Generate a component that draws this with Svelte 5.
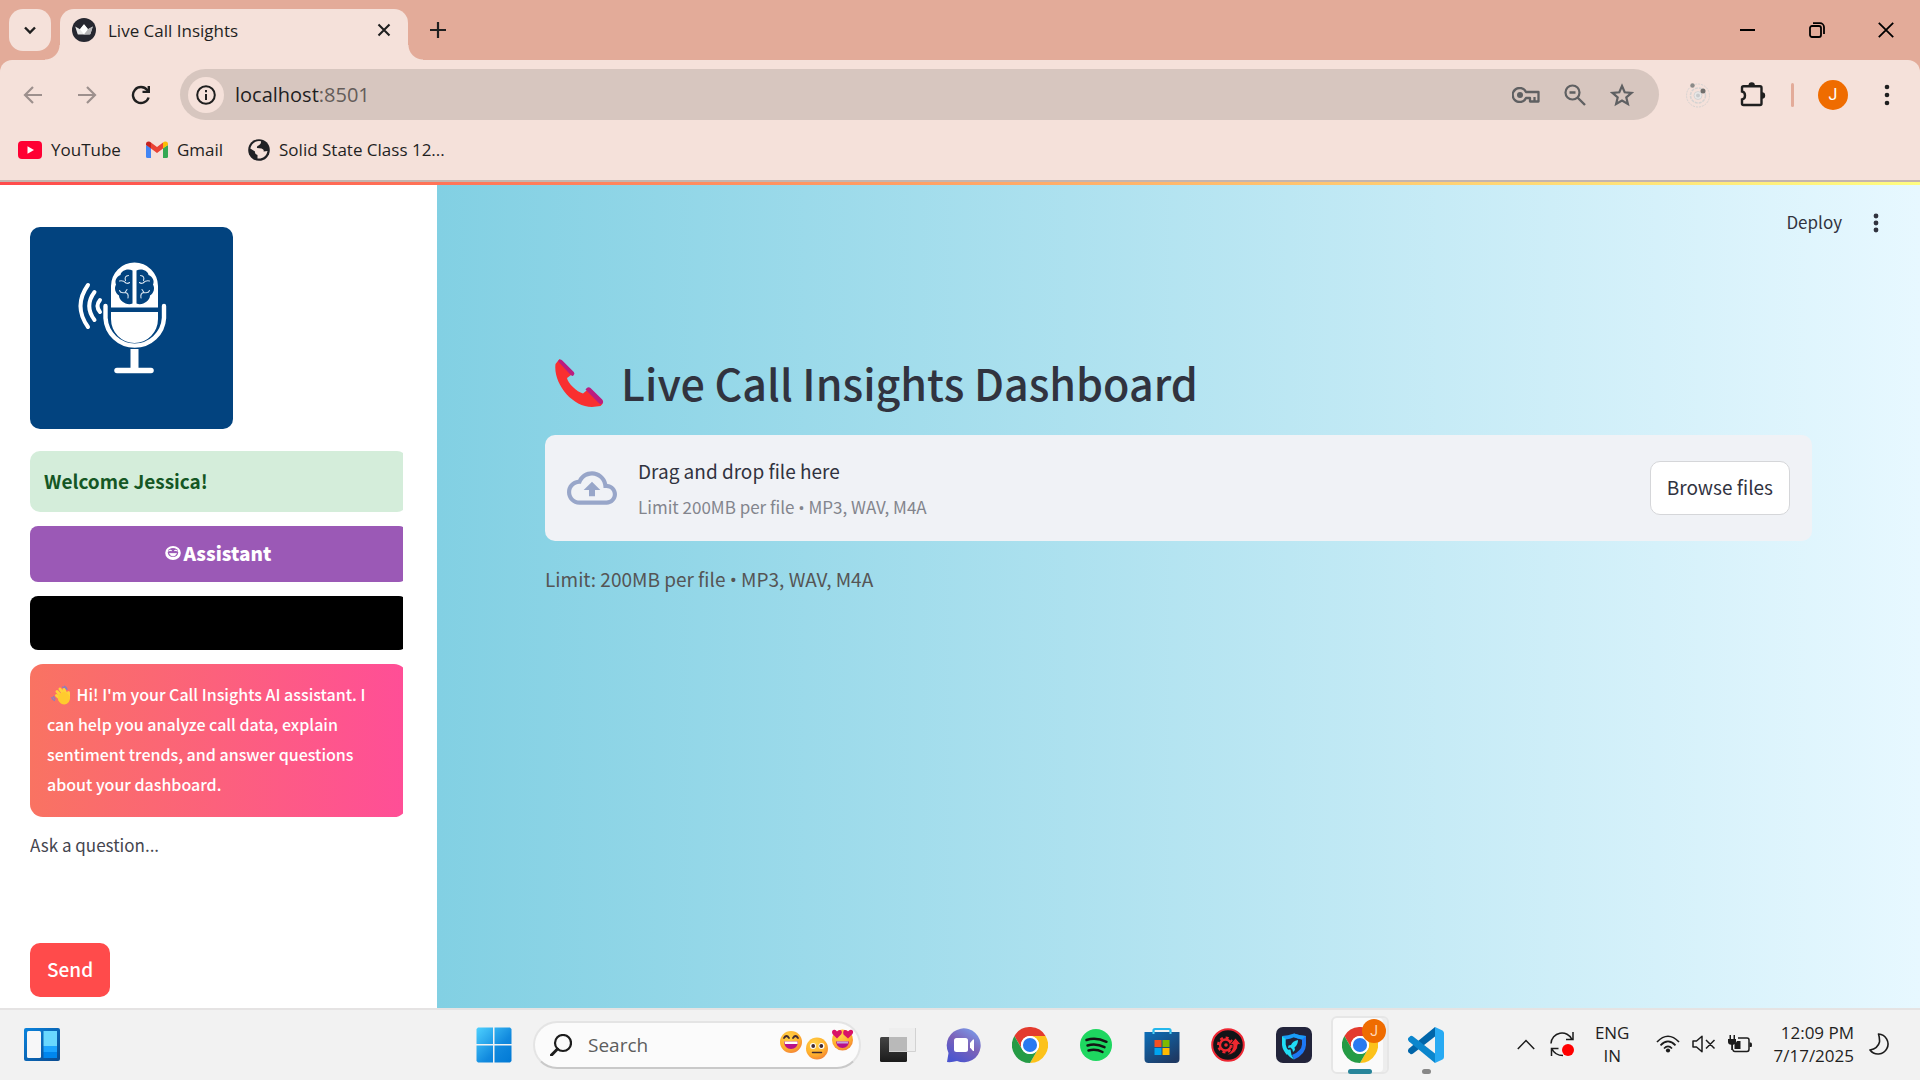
<script>
  const bookmarkLabels = ['YouTube', 'Gmail', 'Solid State Class 12...'];
  let question = $state('');
</script>

{#snippet chromeLogo()}
  <svg width="36" height="36" viewBox="0 0 48 48" aria-hidden="true">
    <circle cx="24" cy="24" r="24" fill="#fff" />
    <path d="M3.2 12A24 24 0 0 1 44.8 12H24A12 12 0 0 0 13.6 30Z" fill="#e33b2e" />
    <path d="M44.8 12A24 24 0 0 1 24 48L34.4 30A12 12 0 0 0 24 12Z" fill="#fcc21b" />
    <path d="M24 48A24 24 0 0 1 3.2 12L13.6 30A12 12 0 0 0 34.4 30Z" fill="#259b45" />
    <circle cx="24" cy="24" r="12" fill="#fff" />
    <circle cx="24" cy="24" r="9.4" fill="#2a7af0" />
  </svg>
{/snippet}

<div class="screen">
  <header class="browser">
    <div class="tabstrip">
      <button class="tab-search" aria-label="Search tabs">
        <svg width="14" height="14" viewBox="0 0 14 14"><path d="M2 4.5 7 9.5 12 4.5" fill="none" stroke="#1f1f1f" stroke-width="2.4" /></svg>
      </button>
      <div class="tab">
        <svg width="24" height="24" viewBox="0 0 24 24" aria-hidden="true">
          <circle cx="12" cy="12" r="12" fill="#262730" />
          <path d="M3.2 8.6 8 11.2 11.6 6.6Q12 6.2 12.4 6.6L16 11.2 20.8 8.6 18.4 16Q18.2 16.6 17.5 16.6H6.5Q5.800 16.6 5.600 16Z" fill="#e6e6e6" />
          <path d="M8 11.200 12 6.400 16 11.200 12 16.600Z" fill="#fff" />
          <path d="M16 11.200 20.800 8.600 18.400 16 12 16.600Z" fill="#b5b5b8" />
        </svg>
        <span class="tab-title">Live Call Insights</span>
        <button class="plain" aria-label="Close tab">
          <svg width="14" height="14" viewBox="0 0 14 14"><path d="M1.500 1.500 12.500 12.500M12.500 1.500 1.500 12.500" stroke="#1f1f1f" stroke-width="2.100" /></svg>
        </button>
      </div>
      <button class="plain newtab" aria-label="New tab">
        <svg width="16" height="16" viewBox="0 0 16 16"><path d="M8 0V16M0 8H16" stroke="#1f1f1f" stroke-width="2.200" /></svg>
      </button>
      <div class="window-controls">
        <button class="plain" aria-label="Minimize"><svg width="16" height="16" viewBox="0 0 16 16"><path d="M0 8H15" stroke="#000" stroke-width="2" /></svg></button>
        <button class="plain" aria-label="Restore"><svg width="16" height="16" viewBox="0 0 16 16" fill="none" stroke="#000" stroke-width="1.800"><rect x="1" y="4" width="11" height="11" rx="2" /><path d="M4 1.200H11A4 4 0 0 1 15 5V12" /></svg></button>
        <button class="plain" aria-label="Close window"><svg width="16" height="16" viewBox="0 0 16 16"><path d="M.8.8 15.200 15.200M15.200.8.8 15.200" stroke="#000" stroke-width="1.800" /></svg></button>
      </div>
    </div>

    <div class="toolbar">
      <button class="plain nav" aria-label="Back"><svg width="20" height="20" viewBox="0 0 20 20"><path d="M19 10H2.500M10 2 2 10 10 18" fill="none" stroke="#9d908d" stroke-width="2.200" /></svg></button>
      <button class="plain nav" aria-label="Forward"><svg width="20" height="20" viewBox="0 0 20 20"><path d="M1 10H17.500M10 2 18 10 10 18" fill="none" stroke="#9d908d" stroke-width="2.200" /></svg></button>
      <button class="plain nav" aria-label="Reload"><svg width="20" height="20" viewBox="0 0 20 20"><path d="M17.600 12.500A8 8 0 1 1 16.200 5L17.500 6.500" fill="none" stroke="#1f1f1f" stroke-width="2.400" /><path d="M19 1V8H11.500V5.800H16.600V1Z" fill="#1f1f1f" /></svg></button>
      <div class="omnibox">
        <button class="site-info" aria-label="Site information">
          <svg width="20" height="20" viewBox="0 0 20 20"><circle cx="10" cy="10" r="8.800" fill="none" stroke="#1f1f1f" stroke-width="2" /><path d="M10 9V15M10 5V7.200" stroke="#1f1f1f" stroke-width="2" /></svg>
        </button>
        <span class="url">localhost<i>:8501</i></span>
        <button class="plain" aria-label="Passwords"><svg width="28" height="16" viewBox="0 0 28 16" fill="none" stroke="#5f6062" stroke-width="2.300"><path d="M14 5A7 7 0 1 0 14 11H18V14.500H26.500V5Z" stroke-linejoin="round" /><path d="M22.500 10V14" /><circle cx="8" cy="8" r="3" fill="#5f6062" stroke="none" /></svg></button>
        <button class="plain" aria-label="Zoom"><svg width="22" height="22" viewBox="0 0 22 22" fill="none" stroke="#5f6062" stroke-width="2.200"><circle cx="8.500" cy="8.500" r="7" /><path d="M13.500 13.500 21 21M5.500 8.500H11.500" stroke-width="2.400" /></svg></button>
        <button class="plain" aria-label="Bookmark this page"><svg width="24" height="24" viewBox="0 0 24 24"><path d="M12 3 14.700 9.300 21.500 9.900 16.300 14.400 17.900 21 12 17.500 6.100 21 7.700 14.400 2.500 9.900 9.300 9.300Z" fill="none" stroke="#5f6062" stroke-width="2.200" /></svg></button>
      </div>
      <button class="plain ext" aria-label="Extension">
        <svg width="26" height="26" viewBox="0 0 26 26" fill="none" stroke="#d5d3d2"><circle cx="13" cy="13.500" r="11.500" stroke-dasharray="2 1" /><circle cx="13" cy="13.500" r="7.500" stroke-width="1.500" stroke-dasharray="3 1" /><circle cx="13" cy="13.500" r="4" fill="#e8e8e8" /><circle cx="13" cy="13.500" r="2" fill="#c8cacb" stroke="none" /><circle cx="7.500" cy="3.500" r="2.200" fill="#8a8a88" stroke="none" /><circle cx="18" cy="9" r="2.500" fill="#706f6d" stroke="none" /></svg>
      </button>
      <button class="plain puzzle" aria-label="Extensions">
        <svg width="26" height="26" viewBox="0 0 26 26"><path d="M3.500 4.200H20Q21.500 4.200 21.500 5.700V21.500Q21.500 23 20 23H3.500Q2 23 2 21.500V17.500Q5 17 5 13.500T2 9.500V5.700Q2 4.200 3.500 4.200Z" fill="none" stroke="#1f1f1f" stroke-width="2.400" /><path d="M8.500 3.500A3.200 3.200 0 0 1 14.900 3.500ZM22 10.300A3.200 3.200 0 0 1 22 16.700Z" fill="#1f1f1f" /></svg>
      </button>
      <span class="divider"></span>
      <button class="avatar" aria-label="Profile">J</button>
      <button class="plain menu" aria-label="Browser menu"><svg width="6" height="22" viewBox="0 0 6 22" fill="#1f1f1f"><circle cx="3" cy="3" r="2.300" /><circle cx="3" cy="11" r="2.300" /><circle cx="3" cy="19" r="2.300" /></svg></button>
    </div>

    <nav class="bookmarks" aria-label="Bookmarks">
      <a href="#youtube">
        <svg width="24" height="18" viewBox="0 0 24 18" aria-hidden="true"><rect width="24" height="18" rx="4" fill="#ff0033" /><path d="M9.500 5.200V12.800L16 9Z" fill="#fff" /></svg>
        {bookmarkLabels[0]}
      </a>
      <a href="#gmail">
        <svg width="22" height="17" viewBox="0 0 22 17" aria-hidden="true"><path d="M0 4V15.500Q0 17 1.500 17H5V7Z" fill="#4285f4" /><path d="M22 4V15.500Q22 17 20.500 17H17V7Z" fill="#34a853" /><path d="M5 1.500 11 6 17 1.500V7.500L11 12 5 7.500Z" fill="#ea4335" /><path d="M0 3.200Q0 .5 2.600.4 4 .4 5 1.500V7.500L0 4Z" fill="#c5221f" /><path d="M22 3.200Q22 .5 19.400.4 18 .4 17 1.500V7.500L22 4Z" fill="#fbbc04" /></svg>
        {bookmarkLabels[1]}
      </a>
      <a href="#solid-state">
        <svg width="22" height="22" viewBox="0 0 22 22" aria-hidden="true"><circle cx="11" cy="11" r="10.800" fill="#202124" /><path d="M7.500 2.700Q10 1.700 13 2.200 13.500 5 11 6.200 8.500 6.500 9 9L13.500 9.500Q16.500 10.500 15.500 12.500L19.500 12Q18.500 18 12.500 19.600L9.500 19.500V16Q6.500 15.500 7 12.500L2.300 9.500Q3.300 5 7.500 2.700Z" fill="#f5e1da" /><path d="M13.500 3 17.800 5.400 19.500 9 15 7.500 12.500 9 11.300 7.200 13.200 6.200Z" fill="#202124" /></svg>
        {bookmarkLabels[2]}
      </a>
    </nav>
  </header>

  <div class="app">
    <aside>
      <div class="side-content">
        <svg class="logo" viewBox="0 0 203 202" role="img" aria-label="Microphone with brain">
          <rect width="203" height="202" fill="#02437f" />
          <g fill="none" stroke="#fff" stroke-linecap="round">
            <path d="M58 58Q43 79 58 100M64.500 65Q54 79 64.500 93M70 73Q65 79 70 85" stroke-width="4" />
            <path d="M75.500 79V91A29.300 29.300 0 0 0 134 91V79" stroke-width="4.400" />
            <path d="M87 143.500H121" stroke-width="5.500" />
            <path d="M104.500 122V142" stroke-width="8" stroke-linecap="butt" />
          </g>
          <path d="M81 80.500V59A23.500 23.500 0 0 1 128 59V80.500ZM81 85H128V92A23.500 24 0 0 1 81 92Z" fill="#fff" />
          <path d="M102.500 43.500C97 41 91 44 90.500 48 86 50 84.500 54 86 57.500 84 61 85 66 89 68.500 89 74 97 79 102.500 76.500ZM106.500 43.500C112 41 118 44 118.500 48 123 50 124.500 54 123 57.500 125 61 124 66 120 68.500 120 74 112 79 106.500 76.500Z" fill="#02437f" />
          <path d="M98.500 48.500Q94 49 95.500 53.500M89.500 54Q93 53 96 56 98 57 99.500 55.500M89.500 63.500Q90.500 66.500 95 65.500 99 66 98 71M95 65.500 97 62.500M110.500 48.500Q115 49 113.500 53.500M119.500 54Q116 53 113 56 111 57 109.500 55.500M119.500 63.500Q118.500 66.500 114 65.500 110 66 111 71M114 65.500 112 62.500" fill="none" stroke="#d5e2ee" stroke-width="1.100" stroke-linecap="round" />
        </svg>
        <div class="card welcome">Welcome Jessica!</div>
        <div class="card assistant">
          <svg width="16" height="14" viewBox="0 0 16 14" aria-hidden="true"><ellipse cx="8" cy="7" rx="7.800" ry="6.900" fill="#fff" /><ellipse cx="8" cy="6.500" rx="5.200" ry="4.500" fill="#9b59b6" /><path d="M3.500 5.200Q5 3.200 7 4.800M9 4.800Q11 3.200 12.500 5.200M4.500 7.500H11.500Q10.500 10 8 10T4.500 7.500Z" fill="#fff" stroke="#fff" stroke-width=".7" /></svg>
          Assistant
        </div>
        <div class="card blank"></div>
        <div class="card bubble">
          <svg class="wave" width="20" height="20" viewBox="0 0 20 20" aria-hidden="true">
            <path d="M13 1Q16 2 16 5M11 2.200Q13.500 2 14.500 4M.8 12Q1 15 4 15.500M2.500 11Q2.500 13.500 4.500 14" fill="none" stroke="#8a7fc0" stroke-width="1.300" />
            <g stroke="#ffd23a" stroke-width="3" stroke-linecap="round"><path d="M6 6.500 12 13M9 4 14 11M13 4.500 15.500 10M5.500 10.500 10 14.500M17.500 7.500V13" /></g>
            <path d="M7.500 9.500 13 6.500 17 9 19 12Q19 19 13.500 19.500 9.500 19.500 7 15Z" fill="#ffcb2e" />
          </svg>
          Hi! I'm your Call Insights AI assistant. I can help you analyze call data, explain sentiment trends, and answer questions about your dashboard.
        </div>
        <label for="question">Ask a question...</label>
        <input id="question" type="text" bind:value={question} />
        <button class="send">Send</button>
      </div>
    </aside>

    <main>
      <div class="app-header">
        <button class="plain deploy">Deploy</button>
        <button class="plain" aria-label="App menu"><svg width="6" height="20" viewBox="0 0 6 20" fill="#31333f"><circle cx="3" cy="3" r="2.400" /><circle cx="3" cy="10" r="2.400" /><circle cx="3" cy="17" r="2.400" /></svg></button>
      </div>
      <div class="content">
        <h1>
          <svg width="50" height="50" viewBox="0 0 50 50" aria-hidden="true"><path d="M5.500 1 1.500 6C-1 25 18 49 38 49L46.500 48Q49.500 46 49 43L35 30.500 29 35.500C23 34 13.500 25 13 20L19 15.500Z" fill="#f92f30" /><path d="M4 3.200Q5.800.2 8.300 2.600L19.800 14Q21.200 15.800 19.600 17.300 18.300 18.700 16.500 16.800ZM31.500 31.500Q34 28 36.500 30L48.200 41.500Q49.800 43.500 48.300 45.500 47 47 45 45.200Z" fill="#bb1d80" /></svg>
          Live Call Insights Dashboard
        </h1>
        <section class="uploader">
          <svg width="50" height="50" viewBox="0 0 24 24" fill="#98a6c9" aria-hidden="true"><path d="M19.350 10.040A7.490 7.490 0 0 0 12 4C9.110 4 6.600 5.640 5.350 8.040A5.994 5.994 0 0 0 0 14c0 3.310 2.690 6 6 6h13c2.760 0 5-2.240 5-5 0-2.640-2.050-4.780-4.650-4.960zM19 18H6c-2.210 0-4-1.790-4-4s1.790-4 4-4h.71C7.370 7.690 9.480 6 12 6c3.040 0 5.500 2.460 5.500 5.500v.5H19c1.660 0 3 1.340 3 3s-1.340 3-3 3zM8 13h2.550v3h2.900v-3H16l-4-4z" /></svg>
          <div class="drop-text">
            <span>Drag and drop file here</span>
            <small>Limit 200MB per file <b class="dot">•</b> MP3, WAV, M4A</small>
          </div>
          <button class="browse">Browse files</button>
        </section>
        <p>Limit: 200MB per file <b class="dot">•</b> MP3, WAV, M4A</p>
      </div>
    </main>
  </div>

  <footer class="taskbar">
    <button class="plain widgets" aria-label="Widgets">
      <svg width="36" height="34" viewBox="0 0 36 34"><defs><linearGradient id="wg" x2="1" y2="1"><stop stop-color="#0a84de" /><stop offset="1" stop-color="#0b4a8f" /></linearGradient></defs><rect width="36" height="33" rx="2" fill="url(#wg)" /><rect x="3" y="3" width="14" height="27" rx="1.500" fill="#f7f7f8" /><path d="M19.500 3H33V18H19.500Z" fill="#69d8ff" /><path d="M19.500 18H33V24H19.500Z" fill="#1ba4ff" /><path d="M19.500 24H33V30H19.500Z" fill="#0086ee" /></svg>
    </button>

    <div class="dock">
      <button class="plain slot" aria-label="Start">
        <svg width="36" height="36" viewBox="0 0 36 36"><defs><linearGradient id="win" gradientUnits="userSpaceOnUse" x1="0" y1="0" x2="36" y2="36"><stop stop-color="#4fd2ff" /><stop offset=".6" stop-color="#1189de" /><stop offset="1" stop-color="#0078d4" /></linearGradient></defs><path d="M2 .5H17V17H.5V2ZM18.500.5H34L35.500 2V17H18.500ZM.5 18.500H17V35.500H2L.5 34ZM18.500 18.500H35.500V34L34 35.500H18.500Z" fill="url(#win)" /></svg>
      </button>
      <div class="search">
        <svg width="22" height="22" viewBox="0 0 22 22" fill="none" stroke="#1c1c1c" stroke-width="2.200" aria-hidden="true"><circle cx="13" cy="9" r="8" /><path d="M7.500 15 1.500 21" stroke-width="3" stroke-linecap="round" /></svg>
        <input type="text" placeholder="Search" aria-label="Search" />
        <svg width="74" height="32" viewBox="0 0 74 32" aria-hidden="true">
          <defs><radialGradient id="em" cx=".4" cy=".3" r=".8"><stop stop-color="#ffd34a" /><stop offset=".6" stop-color="#ffb02c" /><stop offset="1" stop-color="#f07838" /></radialGradient></defs>
          <circle cx="11" cy="13" r="11" fill="url(#em)" /><path d="M4 9Q6.500 5 9 9M13 9Q15.500 5 18 9" fill="none" stroke="#402a32" stroke-width="1.800" stroke-linecap="round" /><path d="M4 12.500H18Q17.500 20 11 20T4 12.500Z" fill="#b8108a" /><path d="M4.500 12.500H17.500V15H5Z" fill="#fff" />
          <circle cx="37" cy="19.500" r="11" fill="url(#em)" /><circle cx="33" cy="17" r="3" fill="#fff" /><circle cx="41.500" cy="17" r="3" fill="#fff" /><circle cx="33.200" cy="17" r="1.900" fill="#402a32" /><circle cx="41.300" cy="17" r="1.900" fill="#402a32" /><path d="M32.500 23.500H41.500" stroke="#402a32" stroke-width="1.500" stroke-linecap="round" />
          <circle cx="62.500" cy="11" r="10.500" fill="url(#em)" /><path d="M56 12.500H69Q68.500 19 62.500 19T56 12.500Z" fill="#b8108a" /><path d="M57 12.500H68V14.500H57Z" fill="#c6a0e0" /><path d="M57 9.500 52.500 5Q51 1.500 54 .8 56 .5 57 2.500 59 .3 61 1.300 62.800 3 61 5.500ZM68 9.500 63.500 5.500Q62.500 2.500 64.500 1 66.500.5 68 2.500 69.500.3 72 1 74 2.500 72.500 5Z" fill="#d81368" />
        </svg>
      </div>
      <button class="plain slot" aria-label="Task view">
        <svg width="36" height="36" viewBox="0 0 36 36"><defs><linearGradient id="tv" x2="0" y2="1"><stop stop-color="#444" /><stop offset="1" stop-color="#1b1b1b" /></linearGradient></defs><rect y="10" width="27" height="25" rx="1.500" fill="url(#tv)" /><rect x="9" y="1" width="27" height="24" rx="1" fill="#ececec" opacity=".8" /><path d="M9 10H27V25H9Z" fill="#b9b9b9" /><path d="M35.500 1V24.500H9" fill="none" stroke="#d2d2d2" /></svg>
      </button>
      <button class="plain slot" aria-label="Chat">
        <svg width="36" height="36" viewBox="0 0 36 36"><defs><linearGradient id="tm" x1=".9" y1="0" x2=".3" y2="1"><stop stop-color="#7aa0ee" /><stop offset=".5" stop-color="#7c62b8" /><stop offset="1" stop-color="#4b55cf" /></linearGradient></defs><path d="M1 35 2.500 26A17 17 0 1 1 11 34Q6 35.500 1 35Z" fill="url(#tm)" /><rect x="8" y="11" width="14" height="14" rx="2.500" fill="#fff" /><path d="M24 16 27 12.500H28V24H27L24 20.500Z" fill="#fff" /></svg>
      </button>
      <button class="plain slot" aria-label="Chrome">{@render chromeLogo()}</button>
      <button class="plain slot" aria-label="Spotify">
        <svg width="32" height="32" viewBox="0 0 32 32"><circle cx="16" cy="16" r="16" fill="#1ed760" /><path d="M6.500 11Q16 7.800 26.500 12.800M7.500 16.500Q16 14 24.500 18.200M8.500 21.500Q16 19.600 22.500 23" fill="none" stroke="#141414" stroke-width="2.500" stroke-linecap="round" /></svg>
      </button>
      <button class="plain slot" aria-label="Microsoft Store">
        <svg width="36" height="36" viewBox="0 0 36 36"><defs><linearGradient id="st" x1="0" y1="0" x2=".7" y2="1"><stop stop-color="#0d6fb9" /><stop offset="1" stop-color="#1e3a64" /></linearGradient></defs><path d="M9.500 10V3.500Q9.500 2 11 2H25Q26.500 2 26.500 3.500V10" fill="none" stroke="#24b7ec" stroke-width="2.200" /><path d="M.5 5H35.500V32Q35.500 36 31.500 36H4.500Q.5 36 .5 32Z" fill="url(#st)" /><path d="M9.500 5V7M26.500 5V7" stroke="#4fd2f5" stroke-width="2" /><path d="M10.500 13H17.500V20H10.500Z" fill="#f25022" /><path d="M18.500 13H25.500V20H18.500Z" fill="#7fba00" /><path d="M10.500 21H17.500V28H10.500Z" fill="#00a4ef" /><path d="M18.500 21H25.500V28H18.500Z" fill="#ffb900" /></svg>
      </button>
      <button class="plain slot" aria-label="Driver updater">
        <svg width="34" height="34" viewBox="0 0 34 34"><circle cx="17" cy="17" r="15.800" fill="#121417" stroke="#ee2733" stroke-width="2" /><circle cx="14.500" cy="17" r="5.500" fill="none" stroke="#f02830" stroke-width="2.400" /><circle cx="14.500" cy="17" r="7.400" fill="none" stroke="#f02830" stroke-width="2.200" stroke-dasharray="3 2.800" /><path d="M16 27.500Q22.500 22 22 16.500H19L24.500 10 30 16.500H27Q27 25 16 27.500Z" fill="#f02830" stroke="#121417" stroke-width=".8" /><circle cx="15" cy="17" r="1.800" fill="#f02830" /></svg>
      </button>
      <button class="plain slot" aria-label="Security">
        <svg width="36" height="36" viewBox="0 0 36 36"><rect width="36" height="36" rx="7" fill="#22243b" /><path d="M18 6.500Q24 8.500 30 9V18Q29.500 27.500 18 32.500L16 28Q25.500 24 26 17.500V12.500Q22 12 18 10.200Z" fill="#1d78f5" /><path d="M18 6.500Q12 8.500 6 9L9.500 12.500Q14 12 18 10.200L26 12.500 30 9Q24 8.500 18 6.500Z" fill="#199df8" /><path d="M6 9V18Q6.500 23 11 28L13.500 25Q10 21 9.700 17.500V12Z" fill="#20ddf5" /><path d="M22 13Q16.500 14 15 18L12.500 18.500 12 21 14.500 20.500 16.500 22.500 17 25 19 23 18.500 20.500Q22 18 22 13ZM9 23 14.500 22.500 15.500 28 18 32.500Q12 30 9 23Z" fill="#20ddf5" /></svg>
      </button>
      <button class="plain slot" aria-label="Chrome, active profile J">
        <span class="active-tile">
          {@render chromeLogo()}
          <span class="badge">J</span>
        </span>
      </button>
      <button class="plain slot running" aria-label="Visual Studio Code">
        <svg width="36" height="36" viewBox="0 0 36 36"><path d="M1 21.500Q-.8 23.500.5 25.200L2.500 27Q3.500 27.500 4.800 26.800L27 9.500V0Z" fill="#0065a9" /><path d="M1 14.500Q-.8 12.500.5 10.800L2.500 9Q3.500 8.500 4.800 9.200L27 26.500V36Z" fill="#0b86cd" /><path d="M27 0 34.500 3.500Q36 4.500 36 6V30Q36 31.500 34.500 32.500L27 36Z" fill="#28aaf3" /></svg>
      </button>
    </div>

    <div class="tray">
      <button class="plain" aria-label="Hidden icons"><svg width="18" height="12" viewBox="0 0 18 12"><path d="M.8 11 9 2.500 17.200 11" fill="none" stroke="#1c1c1c" stroke-width="1.500" /></svg></button>
      <svg width="24" height="26" viewBox="0 0 24 26" aria-hidden="true"><path d="M1 12.500A11 11 0 0 1 22 8.500M23 1V8.500H16M13 24.500Q5 24.500 2 18M1.500 25V17.500H8.500" fill="none" stroke="#1c1c1c" stroke-width="1.500" /><circle cx="18" cy="19" r="6" fill="#f00" /></svg>
      <span class="lang">ENG<br />IN</span>
      <div class="status">
        <svg width="24" height="18" viewBox="0 0 24 18" aria-hidden="true"><path d="M1 7Q12-4.500 23 7M4.500 10.300Q12 2.500 19.500 10.300M8 13.500Q12 9.300 16 13.500" fill="none" stroke="#1c1c1c" stroke-width="1.700" /><circle cx="12" cy="15.500" r="2.100" fill="#1c1c1c" /></svg>
        <svg width="24" height="18" viewBox="0 0 24 18" fill="none" stroke="#1c1c1c" stroke-width="1.500" aria-hidden="true"><path d="M1 6H4.500L10 1.200V16.800L4.500 12H1ZM14 5 22.500 13.500M22.500 5 14 13.500" stroke-linejoin="round" /></svg>
        <svg width="24" height="20" viewBox="0 0 24 20" aria-hidden="true"><path d="M10 4H19Q21 4 21 6V15Q21 17.500 19 17.500H7Q5 17.500 5 15.500" fill="none" stroke="#1c1c1c" stroke-width="1.500" /><path d="M21.500 8.500H23Q24 8.500 24 11T23 13H21.500ZM9 7H12.500V15H6.500V11ZM0 5H8V8Q8 10.500 5 10.700V16H3.200V10.700Q0 10.500 0 8ZM1.500 1H3V5H1.500ZM5.500 1H7V5H5.500Z" fill="#1c1c1c" /></svg>
      </div>
      <span class="clock">12:09 PM<br />7/17/2025</span>
      <svg width="20" height="22" viewBox="0 0 20 22" aria-hidden="true"><path d="M9.500 1A10 10 0 1 1 1 17Q9 15.500 10.500 9 10.800 5 9.500 1Z" fill="none" stroke="#1c1c1c" stroke-width="1.600" stroke-linejoin="round" /></svg>
    </div>
  </footer>
</div>

<style>
  :global(body) {
    margin: 0;
  }
  :global(*) {
    box-sizing: border-box;
  }
  .screen {
    min-height: 100vh;
    display: flex;
    flex-direction: column;
    font-family: 'Open Sans', 'Noto Sans', sans-serif;
    color: #1f1f1f;
  }
  svg {
    display: block;
    flex: none;
  }
  button,
  input {
    font: inherit;
    color: inherit;
  }
  .plain {
    display: flex;
    align-items: center;
    justify-content: center;
    padding: 0;
    border: 0;
    background: none;
  }

  /* browser chrome */
  .browser {
    background: #e3ab99;
  }
  .tabstrip {
    display: flex;
    height: 60px;
    padding: 9px 20px 0 9px;
  }
  .tab-search {
    display: grid;
    place-items: center;
    width: 42px;
    height: 42px;
    padding: 0;
    border: 0;
    border-radius: 14px;
    background: #f5e1da;
  }
  .tab {
    position: relative;
    display: flex;
    align-items: center;
    gap: 12px;
    width: 348px;
    margin-left: 9px;
    padding: 0 17px 9px 12px;
    border-radius: 14px 14px 0 0;
    background: #f5e1da;
    font-size: 17px;
  }
  .tab::before,
  .tab::after {
    content: '';
    position: absolute;
    bottom: 0;
    width: 15px;
    height: 15px;
  }
  .tab::before {
    right: 100%;
    background: radial-gradient(circle at 0 0, transparent 14px, #f5e1da 15px);
  }
  .tab::after {
    left: 100%;
    background: radial-gradient(circle at 100% 0, transparent 14px, #f5e1da 15px);
  }
  .tab-title {
    flex: 1;
  }
  .newtab {
    margin: 0 0 9px 22px;
  }
  .window-controls {
    display: flex;
    gap: 53px;
    margin: 0 6px 9px auto;
  }
  .toolbar {
    display: flex;
    align-items: center;
    padding: 9px 30px 9px 23px;
    border-radius: 12px 12px 0 0;
    background: #f5e1da;
  }
  .nav {
    margin-right: 34px;
  }
  .nav + .nav + .nav {
    margin-right: 29px;
  }
  .omnibox {
    display: flex;
    align-items: center;
    gap: 24px;
    flex: 1;
    height: 51px;
    padding: 0 25px 0 8px;
    border-radius: 26px;
    background: #d7c6bf;
  }
  .site-info {
    display: grid;
    place-items: center;
    width: 36px;
    height: 36px;
    padding: 0;
    border: 0;
    border-radius: 50%;
    background: #f5e1da;
  }
  .url {
    flex: 1;
    margin-left: -13px;
    font-size: 20px;
    line-height: 28px;
  }
  .url i {
    font-style: normal;
    color: #645c59;
  }
  .ext {
    margin-left: 26px;
  }
  .puzzle {
    margin-left: 29px;
  }
  .divider {
    width: 3px;
    height: 24px;
    margin: 0 24px 0 25px;
    border-radius: 2px;
    background: #e3ab99;
  }
  .avatar {
    width: 30px;
    height: 30px;
    padding: 0;
    border: 0;
    border-radius: 50%;
    background: #ef6c00;
    color: #fff;
    font-family: Roboto, sans-serif;
    font-size: 16px;
    line-height: 30px;
  }
  .menu {
    margin-left: 36px;
  }
  .bookmarks {
    display: flex;
    align-items: center;
    gap: 25px;
    height: 53px;
    padding: 0 18px 10px;
    border-bottom: 2px solid #c5b4ae;
    background: #f5e1da;
    font-size: 17px;
  }
  .bookmarks a {
    display: flex;
    align-items: center;
    gap: 9px;
    color: inherit;
    text-decoration: none;
  }

  /* web app */
  .app {
    flex: 1;
    display: flex;
    padding-top: 3px;
    background: linear-gradient(90deg, #ff4b4b, #fffd80);
    font-family: 'Noto Sans CJK SC', 'Open Sans', sans-serif;
    color: #31333f;
  }
  aside {
    width: 437px;
    padding: 42px 34px 11px 30px;
    background: #fff;
  }
  .side-content {
    display: flex;
    flex-direction: column;
    align-items: flex-start;
    overflow: hidden;
  }
  .logo {
    width: 203px;
    margin-bottom: 22px;
    border-radius: 10px;
  }
  .card {
    align-self: stretch;
    margin-right: -4px;
    margin-bottom: 14px;
    border-radius: 8px;
  }
  .welcome {
    padding: 15px 14px 17px;
    border-radius: 10px;
    background: #d4edda;
    color: #155724;
    font-size: 19px;
    font-weight: 700;
    line-height: 29px;
  }
  .assistant {
    display: flex;
    align-items: center;
    justify-content: center;
    gap: 2px;
    padding: 12px 0 14px;
    background: #9b59b6;
    color: #fff;
    font-size: 19px;
    font-weight: 900;
    line-height: 30px;
  }
  .blank {
    height: 54px;
    background: #000;
  }
  .bubble {
    padding: 15px 16px 18px 17px;
    border-radius: 13px;
    background: linear-gradient(90deg, #f97362, #ff4e97);
    color: #fff;
    font-size: 16px;
    font-weight: 500;
    line-height: 30px;
  }
  .wave {
    display: inline-block;
    margin: 0 2px 0 4px;
    vertical-align: -4px;
  }
  label {
    color: #45464f;
    font-size: 17px;
    line-height: 28px;
  }
  #question {
    width: 100%;
    height: 50px;
    margin: 8px 0 26px;
    padding: 0 16px;
    border: 0;
    background: #fff;
    font-size: 19px;
  }
  .send {
    padding: 11px 17px 13px;
    border: 0;
    border-radius: 10px;
    background: #ff4b4b;
    color: #fff;
    font-size: 19px;
    font-weight: 500;
    line-height: 30px;
  }
  main {
    flex: 1;
    background: linear-gradient(90deg, #82d0e3, #e7f8ff);
  }
  .app-header {
    display: flex;
    align-items: center;
    justify-content: flex-end;
    gap: 31px;
    height: 75px;
    padding: 0 41px 0 0;
  }
  .deploy {
    padding-bottom: 2px;
    font-size: 17px;
    line-height: 24px;
  }
  .content {
    padding: 88px 108px 0;
  }
  h1 {
    display: flex;
    align-items: center;
    gap: 17px;
    margin: 0 0 18px 9px;
    font-size: 43px;
    font-weight: 500;
    line-height: 69px;
  }
  .uploader {
    display: flex;
    align-items: center;
    gap: 21px;
    padding: 20px 22px;
    border-radius: 10px;
    background: #f0f2f6;
  }
  .drop-text {
    flex: 1;
    display: flex;
    flex-direction: column;
    gap: 6px;
    font-size: 19px;
    line-height: 32px;
  }
  .drop-text small {
    color: #83858d;
    font-size: 17px;
    line-height: 28px;
  }
  .dot {
    font-family: 'Open Sans', sans-serif;
    font-weight: 400;
    line-height: 1;
  }
  .browse {
    padding: 10px 16px 12px;
    border: 1px solid #d5d6d9;
    border-radius: 10px;
    background: #fff;
    font-size: 19px;
    line-height: 30px;
  }
  p {
    margin: 23px 0 0;
    color: #555;
    font-size: 19px;
    line-height: 30px;
  }

  /* taskbar */
  .taskbar {
    display: grid;
    grid-template-columns: 1fr auto 1fr;
    align-items: center;
    height: 72px;
    border-top: 2px solid #e5e3e3;
    background: #f2f2f2;
  }
  .widgets {
    justify-self: start;
    margin-left: 24px;
  }
  .dock {
    display: flex;
    align-items: center;
  }
  .slot {
    position: relative;
    width: 66px;
    height: 66px;
  }
  .search {
    display: flex;
    align-items: center;
    gap: 16px;
    width: 328px;
    height: 48px;
    margin: 0 4px 0 6px;
    padding: 0 5px 0 15px;
    border: 2px solid #e4e4e4;
    border-bottom-color: #c9c9c9;
    border-radius: 24px;
    background: #fbfbfb;
  }
  .search input {
    flex: 1;
    min-width: 0;
    padding: 0;
    border: 0;
    background: none;
    font-size: 19px;
  }
  .search input::placeholder {
    color: #5d5d5d;
    opacity: 1;
  }
  .active-tile {
    display: flex;
    align-items: center;
    justify-content: center;
    width: 58px;
    height: 58px;
    border: 2px solid #e6e6e6;
    border-radius: 6px;
    background: #fafafa;
    box-shadow: inset -4px 0 #ededed;
  }
  .active-tile::after,
  .running::after {
    content: '';
    position: absolute;
    bottom: 4px;
    left: 21px;
    width: 24px;
    height: 5px;
    border-radius: 3px;
    background: #28859a;
  }
  .running::after {
    left: 29px;
    width: 9px;
    background: #888;
  }
  .badge {
    position: absolute;
    top: 7px;
    right: 7px;
    width: 24px;
    height: 24px;
    border-radius: 50%;
    background: #ef6c00;
    color: #ffd9b8;
    font-family: Roboto, sans-serif;
    font-size: 14px;
    line-height: 24px;
    text-align: center;
  }
  .tray {
    display: flex;
    align-items: center;
    justify-content: flex-end;
    gap: 15px;
    padding: 0 31px 2px 0;
    font-size: 17px;
    line-height: 23px;
  }
  .lang {
    margin: 0 12px 0 6px;
    text-align: center;
  }
  .status {
    display: flex;
    align-items: center;
    gap: 12px;
    margin-right: 6px;
  }
  .clock {
    text-align: right;
  }
</style>
